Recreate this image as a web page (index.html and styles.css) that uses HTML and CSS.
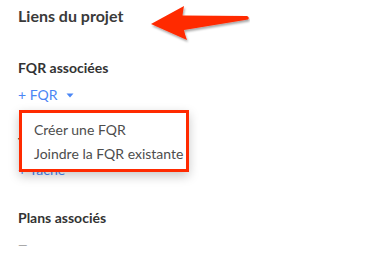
FILE: index.html
```html
<!DOCTYPE html>
<html lang="fr">
<head>
<meta charset="utf-8">
<title>Liens du projet</title>
<link rel="stylesheet" href="styles.css">
</head>
<body>
<div class="panel">
  <h2 class="title">Liens du projet</h2>

  <div class="group">
    <div class="label">FQR associées</div>
    <div class="add-wrap">
      <a class="link">+ FQR <svg class="caret" width="8" height="5" viewBox="0 0 8 5"><path d="M0.5 0.5 L7.5 0.5 L4 4.5 Z" fill="#4a86f5"/></svg></a>
      <div class="menu">
        <div class="menu-item">Créer une FQR</div>
        <div class="menu-item">Joindre la FQR existante</div>
      </div>
    </div>
  </div>

  <div class="group">
    <div class="label">Tâches associées</div>
    <a class="link">+ Tâche</a>
  </div>

  <div class="group last">
    <div class="label">Plans associés</div>
    <div class="empty">—</div>
  </div>

  <svg class="arrow" width="110" height="46" viewBox="140 0 110 46">
    <defs>
      <filter id="sh" x="-20%" y="-30%" width="140%" height="170%">
        <feDropShadow dx="1" dy="2" stdDeviation="1.2" flood-color="#000" flood-opacity="0.35"/>
      </filter>
    </defs>
    <path d="M151 24 L184 6 Q183 11 182.5 15.5 L247 16 Q250 17.5 248 19.5 L184 30 Q185 35 187 40 Z" fill="#ff2a00" filter="url(#sh)"/>
  </svg>
</div>
</body>
</html>
```

FILE: styles.css
```css
html, body {
  margin: 0;
  padding: 0;
  background: #ffffff;
}
body {
  font-family: Lato, "Noto Sans", sans-serif;
  width: 383px;
  height: 254px;
  overflow: hidden;
}
.panel {
  position: relative;
  padding: 6px 0 0 18px;
  display: flex;
  flex-direction: column;
}
.title {
  margin: 0 0 32px 0;
  font-size: 16px;
  line-height: 20px;
  font-weight: 700;
  color: #3a3a3a;
}
.group {
  display: flex;
  flex-direction: column;
  gap: 7px;
  margin-bottom: 28px;
}
.group.last {
  margin-bottom: 0;
}
.label {
  font-size: 14px;
  line-height: 20px;
  font-weight: 700;
  color: #333333;
}
.add-wrap {
  position: relative;
}
.link {
  font-size: 14px;
  line-height: 20px;
  color: #4a86f5;
  display: flex;
  align-items: center;
}
.caret {
  margin-left: 8px;
  margin-top: 1px;
}
.empty {
  font-size: 12px;
  line-height: 20px;
  color: #9a9a9a;
}
.menu {
  position: absolute;
  left: 1px;
  top: 25px;
  width: 164px;
  padding: 5px 0 3px 0;
  background: #ffffff;
  border: 3px solid #ff2a00;
  box-shadow: 0 4px 10px rgba(0, 0, 0, 0.22);
  z-index: 2;
}
.menu-item {
  padding-left: 12px;
  font-size: 14px;
  line-height: 24px;
  color: #4d4d4d;
  white-space: nowrap;
}
.arrow {
  position: absolute;
  left: 140px;
  top: 0;
}
```
